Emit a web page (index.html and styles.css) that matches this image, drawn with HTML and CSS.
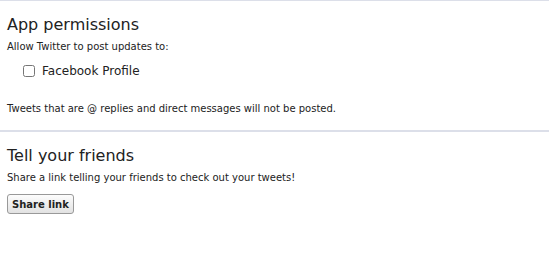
FILE: index.html
```html
<!DOCTYPE html>
<html>
    <head>
        <title>Settings</title>
        <link rel="stylesheet" href="styles.css">
    </head>
    <body>
        <div id="container">
            <div class="section">
                <h2>App permissions</h2>
                <p class="lead">Allow Twitter to post updates to:</p>
                <label class="option">
                    <input type="checkbox" class="check">
                    <span>Facebook Profile</span>
                </label>
                <p class="note">Tweets that are @ replies and direct messages will not be posted.</p>
            </div>
            <div class="section">
                <h2>Tell your friends</h2>
                <p class="lead">Share a link telling your friends to check out your tweets!</p>
                <button class="button">Share link</button>
            </div>
        </div>
    </body>
</html>
```

FILE: styles.css
```css
body {
    margin: 0;
    background-color: white;
    color: #222;
    font-family: 'DejaVu Sans', Verdana, sans-serif;
    font-size: 10px;
}

#container {
    width: 549px;
}

.section {
    border-top: 2px solid #dcdfe9;
    padding: 13px 7px 14px 7px;
}

.section:first-child {
    border-top-width: 1px;
}

h2 {
    margin: 0;
    font-size: 16px;
    font-weight: normal;
    line-height: 22px;
}

.lead {
    margin: 4px 0 0 0;
    line-height: 14px;
}

.option {
    display: flex;
    align-items: center;
    margin: 10px 0 0 16px;
    font-size: 12px;
}

.check {
    margin: 0 7px 0 0;
    width: 12px;
    height: 12px;
}

.note {
    margin: 24px 0 0 0;
    line-height: 14px;
}

.button {
    margin-top: 9px;
    padding: 4px 4px 3px 4px;
    font-family: 'DejaVu Sans', Verdana, sans-serif;
    font-size: 10px;
    font-weight: bold;
    color: #222;
    border: 1px solid #999;
    border-radius: 3px;
    background: linear-gradient(#fdfdfd, #e2e2e2);
}
```
